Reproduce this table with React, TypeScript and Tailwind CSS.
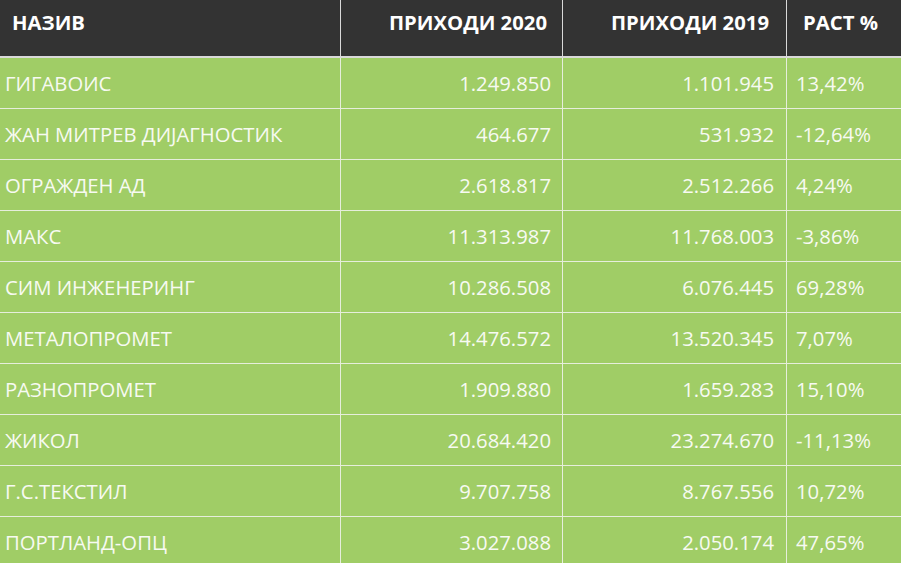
import React from "react";

const rows: [string, string, string, string][] = [
  ["ГИГАВОИС", "1.249.850", "1.101.945", "13,42%"],
  ["ЖАН МИТРЕВ ДИЈАГНОСТИК", "464.677", "531.932", "-12,64%"],
  ["ОГРАЖДЕН АД", "2.618.817", "2.512.266", "4,24%"],
  ["МАКС", "11.313.987", "11.768.003", "-3,86%"],
  ["СИМ ИНЖЕНЕРИНГ", "10.286.508", "6.076.445", "69,28%"],
  ["МЕТАЛОПРОМЕТ", "14.476.572", "13.520.345", "7,07%"],
  ["РАЗНОПРОМЕТ", "1.909.880", "1.659.283", "15,10%"],
  ["ЖИКОЛ", "20.684.420", "23.274.670", "-11,13%"],
  ["Г.С.ТЕКСТИЛ", "9.707.758", "8.767.556", "10,72%"],
  ["ПОРТЛАНД-ОПЦ", "3.027.088", "2.050.174", "47,65%"],
];

export default function App() {
  return (
    <div
      className="w-[901px] h-[563px] overflow-hidden bg-[#a0cd66]"
      style={{ fontFamily: '"Open Sans", "Noto Sans", sans-serif' }}
    >
      <div className="grid grid-cols-[341px_222px_224px_114px]">
        <div className="h-[58px] bg-[#333333] border-r border-b-2 border-[#d9d9d9] pl-[12px] pt-[7px] text-[20.3px] leading-[30px] font-bold text-white">
          НАЗИВ
        </div>
        <div className="h-[58px] bg-[#333333] border-r border-b-2 border-[#d9d9d9] pr-[15px] pt-[7px] text-right text-[20.3px] leading-[30px] font-bold text-white">
          ПРИХОДИ 2020
        </div>
        <div className="h-[58px] bg-[#333333] border-r border-b-2 border-[#d9d9d9] pr-[17px] pt-[7px] text-right text-[20.3px] leading-[30px] font-bold text-white">
          ПРИХОДИ 2019
        </div>
        <div className="h-[58px] bg-[#333333] border-b-2 border-[#d9d9d9] pl-[16px] pt-[7px] text-[20.3px] leading-[30px] font-bold text-white">
          РАСТ %
        </div>
        {rows.map((r, i) => (
          <React.Fragment key={i}>
            <div className="h-[51px] border-r border-b border-[#e6eedc] pl-[5px] flex items-center text-[20.3px] text-[#f7faf2]">
              {r[0]}
            </div>
            <div className="h-[51px] border-r border-b border-[#e6eedc] pr-[11px] flex items-center justify-end text-[20.3px] text-[#f7faf2]">
              {r[1]}
            </div>
            <div className="h-[51px] border-r border-b border-[#e6eedc] pr-[12px] flex items-center justify-end text-[20.3px] text-[#f7faf2]">
              {r[2]}
            </div>
            <div className="h-[51px] border-b border-[#e6eedc] pl-[9px] flex items-center text-[20.3px] text-[#f7faf2]">
              {r[3]}
            </div>
          </React.Fragment>
        ))}
      </div>
    </div>
  );
}
